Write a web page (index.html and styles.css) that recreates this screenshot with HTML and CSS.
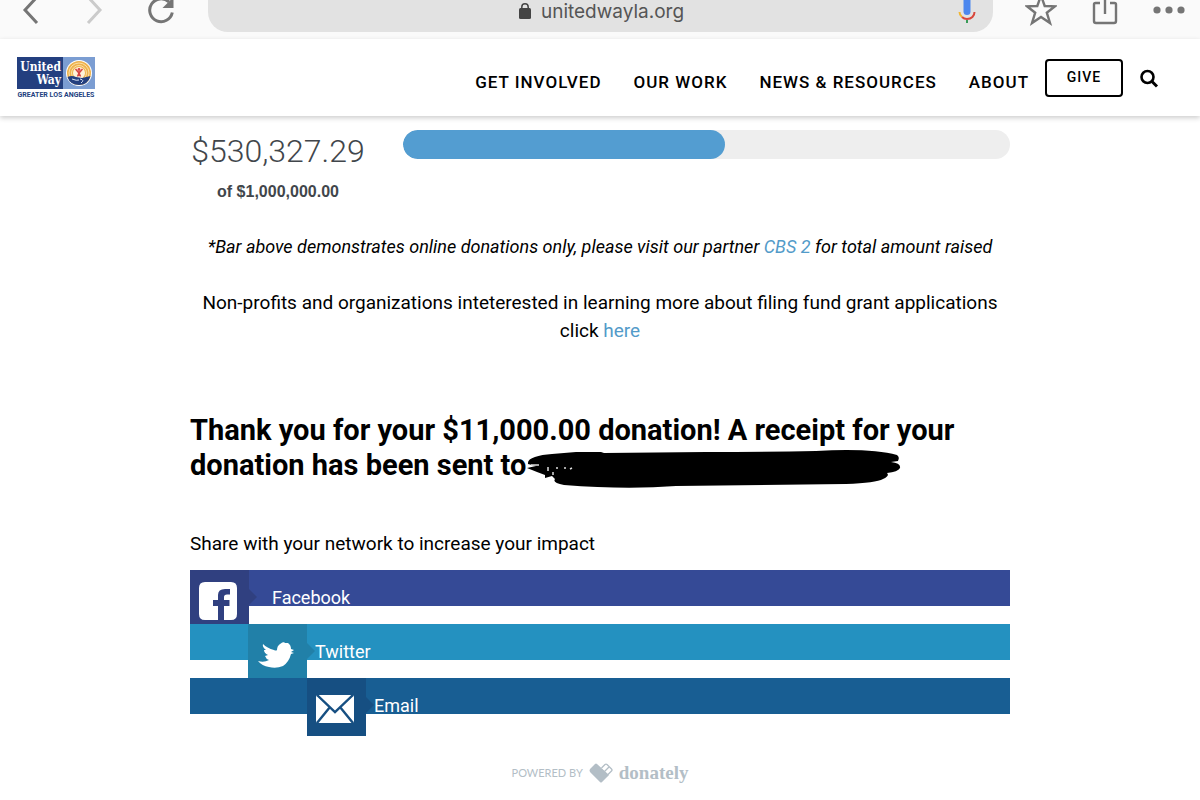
FILE: index.html
```html
<!DOCTYPE html>
<html lang="en">
<head>
<meta charset="utf-8">
<meta name="viewport" content="width=device-width, initial-scale=1">
<title>United Way of Greater Los Angeles</title>
<link rel="stylesheet" href="styles.css">
</head>
<body>
<div class="browser-bar">
  <div class="browser-nav">
    <button class="icon-button" aria-label="Back"><svg width="20" height="28" viewBox="0 0 20 28"><path d="M16 -3 L4 10 L16 23" fill="none" stroke="#757575" stroke-width="3"/></svg></button>
    <button class="icon-button" aria-label="Forward"><svg width="20" height="28" viewBox="0 0 20 28"><path d="M4 -3 L16 10 L4 23" fill="none" stroke="#cbcbcb" stroke-width="3"/></svg></button>
    <button class="icon-button" aria-label="Reload"><svg width="28" height="28" viewBox="0 0 28 28"><path d="M22 2 A11.4 11.4 0 1 0 25.300 12.500" fill="none" stroke="#757575" stroke-width="3"/><path d="M26.500 -3V8H15.500Z" fill="#757575"/></svg></button>
  </div>
  <div class="address">
    <span class="address-text"><svg width="12" height="18" viewBox="0 0 12 18"><rect y="6" width="12" height="11" rx="1.500" fill="#444"/><path d="M2.800 7V5a3.200 3.200 0 0 1 6.400 0V7" fill="none" stroke="#444" stroke-width="1.500"/></svg>unitedwayla.org</span>
    <button class="icon-button mic" aria-label="Voice search"><svg width="18" height="24" viewBox="0 0 18 24"><rect x="5.500" y="-4" width="7" height="19" rx="3.500" fill="#4c87ee"/><path d="M1.500 12Q1.500 15 4 17" fill="none" stroke="#f2b632" stroke-width="2"/><path d="M4 17Q6 19 9 19C13.500 19 16.500 16 16.500 12" fill="none" stroke="#d8473c" stroke-width="2"/><path d="M9 20V23" stroke="#399b58" stroke-width="2"/></svg></button>
  </div>
  <div class="browser-tools">
    <button class="icon-button" aria-label="Bookmark"><svg width="32" height="28" viewBox="0 0 32 28"><path d="M16 -4.500L19.700 6L30 6.300L21.800 12.700L25 23L16 17L7 23L10.200 12.700L2 6.300L12.300 6Z" fill="none" stroke="#757575" stroke-width="2.400"/></svg></button>
    <button class="icon-button" aria-label="Share"><svg width="28" height="28" viewBox="0 0 28 28"><path d="M9 3H4.500Q3 3 3 4.500V21Q3 23 5 23H23Q25 23 25 21V4.500Q25 3 23.500 3H19M14 0V14" fill="none" stroke="#757575" stroke-width="2.400"/></svg></button>
    <button class="icon-button" aria-label="More"><svg width="32" height="28" viewBox="0 0 32 28"><g fill="#757575"><circle cx="4" cy="10" r="3.600"/><circle cx="16" cy="10" r="3.600"/><circle cx="28" cy="10" r="3.600"/></g></svg></button>
  </div>
</div>

<header class="site-header">
  <a class="logo" href="#" aria-label="United Way Greater Los Angeles">
    <svg width="80" height="43" viewBox="0 0 80 43">
      <rect x="1" y="1" width="46" height="32" fill="#233f7f"/>
      <rect x="47" y="1" width="32" height="32" fill="#7b9dd2"/>
      <g class="logo-name"><text x="45" y="15" text-anchor="end">United</text><text x="45" y="28" text-anchor="end">Way</text></g>
      <circle cx="63" cy="17" r="13" fill="#fff"/>
      <circle cx="63" cy="17" r="12" fill="#eeb24d"/>
      <g fill="none" stroke="#fbe0a6" stroke-width="1"><circle cx="63" cy="17" r="10"/><circle cx="63" cy="17" r="7.500"/></g>
      <circle cx="63" cy="17" r="6" fill="#fff3d9"/>
      <path d="M51.500 21Q56 19 60 21L66 22L74.500 20Q72 29 63 29Q54 29 51.500 21Z" fill="#233f7f"/>
      <path d="M56 23Q61 25 63 24M64 23Q69 24 65 27" fill="none" stroke="#dbe5f6" stroke-width="1"/>
      <circle cx="63" cy="13.500" r="1.400" fill="#d64443"/>
      <path d="M59.500 13L63 17L66.500 13M63 16V20M61.500 20.500L63 17L64.500 20.500" fill="none" stroke="#d64443" stroke-width="1.500"/>
      <text class="logo-caption" x="40" y="41" text-anchor="middle">GREATER LOS ANGELES</text>
    </svg>
  </a>
  <nav class="site-nav">
    <a href="#">GET INVOLVED</a>
    <a href="#">OUR WORK</a>
    <a href="#">NEWS &amp; RESOURCES</a>
    <a href="#">ABOUT</a>
  </nav>
  <button class="give">GIVE</button>
  <button class="icon-button search" aria-label="Search"><svg width="20" height="20" viewBox="0 0 20 20"><circle cx="8.500" cy="8" r="6" fill="none" stroke="#000" stroke-width="2.600"/><path d="M13 12.500L18 17.500" stroke="#000" stroke-width="3"/></svg></button>
</header>

<main class="content">
  <section class="progress-row">
    <div class="totals">
      <div class="raised">$530,327.29</div>
      <div class="goal">of $1,000,000.00</div>
    </div>
    <div class="track" role="progressbar" aria-label="Raised" aria-valuemin="0" aria-valuemax="100" aria-valuenow="53"><div class="fill" style="width:53%"></div></div>
  </section>
  <p class="note disclaimer"><em>*Bar above demonstrates online donations only, please visit our partner <a href="#">CBS 2</a> for total amount raised</em></p>
  <p class="note">Non-profits and organizations inteterested in learning more about filing fund grant applications click <a href="#">here</a></p>

  <h1 class="thanks">Thank you for your $11,000.00 donation! A receipt for your donation has been sent to<span class="redacted"><svg class="scribble" width="376" height="42" viewBox="0 0 376 42">
    <path d="M2 16C1 10 12 7 26 6L50 4L75 4L78 5L180 4Q240 4 290 3Q345 0 371 7Q374 9 372 13L365 14Q375 15 374 20Q372 24 361 25Q364 28 357 31Q350 35 320 36L150 38Q100 42 38 37Q26 35 29 31L26 28L19 30V27L11 24L1 20L10 18Z"/>
    <path d="M5 17L13 17M22 19V23M27 24V27M31 19V21M38 20L40 20M44 21L46 20" fill="none" stroke="#ddd" stroke-width="1.500"/>
  </svg></span></h1>

  <p class="share-title">Share with your network to increase your impact</p>
  <div class="share">
    <a class="share-row facebook" href="#">
      <span class="tile"><svg width="38" height="38" viewBox="0 0 38 38"><path fill="#fff" fill-rule="evenodd" d="M6 0H32Q38 0 38 6V32Q38 38 32 38H25V24H30.500V18H25V15Q25 12.500 28 12.500H31V7H26Q19 7 19 13V18H14V24H19V38H6Q0 38 0 32V6Q0 0 6 0Z"/></svg></span>
      <span class="share-label">Facebook</span>
    </a>
    <a class="share-row twitter" href="#">
      <span class="tile"><svg width="38" height="28" viewBox="0 0 38 28"><path fill="#fff" d="M1 20Q7 22 12 19Q9 18 8 15L11 14Q7 12 7 9L9 9Q5 6 6 3Q10 7 17 9Q19 10 20 9Q20 5 23 3Q25 1 28 1L27 2L31 2Q34 4 34 8L37 9L34 11L37 12L34 13Q32 21 26 25Q19 28 12 26Q5 25 1 20Z"/></svg></span>
      <span class="share-label">Twitter</span>
    </a>
    <a class="share-row email" href="#">
      <span class="tile"><svg width="38" height="28" viewBox="0 0 38 28"><rect width="38" height="28" rx="2" fill="#fff"/><path d="M1 0L19 17L37 0M1 28L14 12M37 28L24 12" fill="none" stroke="#164f82" stroke-width="2.400"/></svg></span>
      <span class="share-label">Email</span>
    </a>
  </div>
  <footer class="powered">
    <span>POWERED BY</span>
    <svg width="24" height="20" viewBox="0 0 24 20"><path d="M1 6L6 1Q7 0 8 1L20 12L13 19Q12 20 11 19L1 9Q0 7.500 1 6Z" fill="#b3bec6"/><path d="M12.500 5L16 1.500Q17 .8 18 1.500L22.500 6Q23.500 7 22.500 8L18 12.500L12.500 6.500M15.500 8.500L20 4" fill="none" stroke="#b3bec6" stroke-width="1.300"/></svg>
    <a class="donately" href="#">donately</a>
  </footer>
</main>
</body>
</html>
```
FILE: styles.css
```css
* { box-sizing: border-box; }
body { margin: 0; background: #fff; color: #000; font-family: Roboto, "Liberation Sans", sans-serif; }
a { color: #539bc9; text-decoration: none; }
button { font: inherit; }
svg { display: block; }
.icon-button { padding: 0; border: 0; background: none; color: inherit; }

.browser-bar { display: flex; align-items: flex-start; height: 39px; padding: 0 15px 0 21px; background: #fafafa; }
.browser-nav { display: flex; gap: 43px; width: 187px; }
.address { flex: 1; display: flex; align-items: flex-start; height: 32px; padding: 0 17px 0 37px; border-radius: 0 0 20px 20px; background: #e2e2e2; }
.address-text { flex: 1; display: flex; justify-content: center; gap: 10px; padding-top: 2px; color: #555; font: 19px/20px Inter, sans-serif; }
.browser-tools { display: flex; justify-content: space-between; width: 192px; padding-left: 32px; }

.site-header { display: flex; align-items: flex-start; height: 77px; padding: 17px 41px 0 16px; box-shadow: 0 2px 5px rgba(0, 0, 0, .2); position: relative; }
.logo { margin-right: auto; }
.logo-name { fill: #fff; font: bold 12px "DejaVu Serif Condensed", "Liberation Serif", serif; }
.logo-caption { fill: #233f7f; font: bold 7px Roboto, sans-serif; }
.site-nav { display: flex; gap: 32px; padding-top: 16px; }
.site-nav a { color: #000; font-size: 17px; line-height: 20px; font-weight: 500; letter-spacing: 1px; }
.give { width: 78px; height: 38px; margin: 3px 16px 0; padding: 0 0 2px; border: 2px solid #000; border-radius: 4px; background: #fff; color: #000; font-size: 14px; font-weight: 500; letter-spacing: 1px; }
.search { margin-top: 13px; }

.content { max-width: 860px; margin: 0 auto; padding: 14px 20px 0; }
.progress-row { display: flex; gap: 37px; margin-bottom: 31px; }
.totals { width: 176px; color: #41464b; text-align: center; white-space: nowrap; }
.raised { font-size: 32px; line-height: 42px; font-weight: 300; }
.goal { padding-top: 10px; font: bold 16px/20px "Liberation Sans", sans-serif; }
.track { flex: 1; height: 29px; border-radius: 15px; background: #eee; overflow: hidden; }
.fill { height: 100%; border-radius: 15px; background: #539dd1; }
.note { margin: 0 0 28px; font-size: 19px; line-height: 28px; text-align: center; }
.disclaimer { font-size: 18px; }
.thanks { margin: 68px 0 47px; font-size: 29px; line-height: 35px; font-weight: 700; }
.redacted { position: relative; }
.scribble { position: absolute; left: 0; top: 0; }
.share-title { margin: 0 0 12px; font-size: 19px; line-height: 28px; }

.share { display: flex; flex-direction: column; gap: 18px; }
.share-row { display: flex; align-items: flex-start; isolation: isolate; height: 36px; color: #fff; font-size: 18px; line-height: 56px; }
.tile { display: grid; place-items: center; flex: none; width: 59px; height: 58px; padding: 3px 3px 0 0; position: relative; }
.tile::after { content: ""; position: absolute; left: 100%; top: 19px; border: 8px solid transparent; border-right-width: 0; }
.share-label { margin-left: 8px; }
.facebook { background: #354a96; }
.facebook .tile { background: #304080; }
.facebook .tile::after { border-left-color: #304080; }
.facebook .share-label { margin-left: 23px; }
.twitter { padding-left: 58px; background: #2491c0; }
.twitter .tile { background: #2180a8; }
.twitter .tile::after { border-left-color: #2180a8; }
.email { padding-left: 117px; background: #185e93; }
.email .tile { background: #164f82; }
.email .tile::after { border-left-color: #164f82; }

.powered { display: flex; justify-content: center; align-items: center; gap: 6px; margin-top: 45px; color: #b3bec6; font: 11px/28px Lato, sans-serif; }
.donately { color: #b3bec6; font: bold 19px/28px "Liberation Serif", serif; }
```
